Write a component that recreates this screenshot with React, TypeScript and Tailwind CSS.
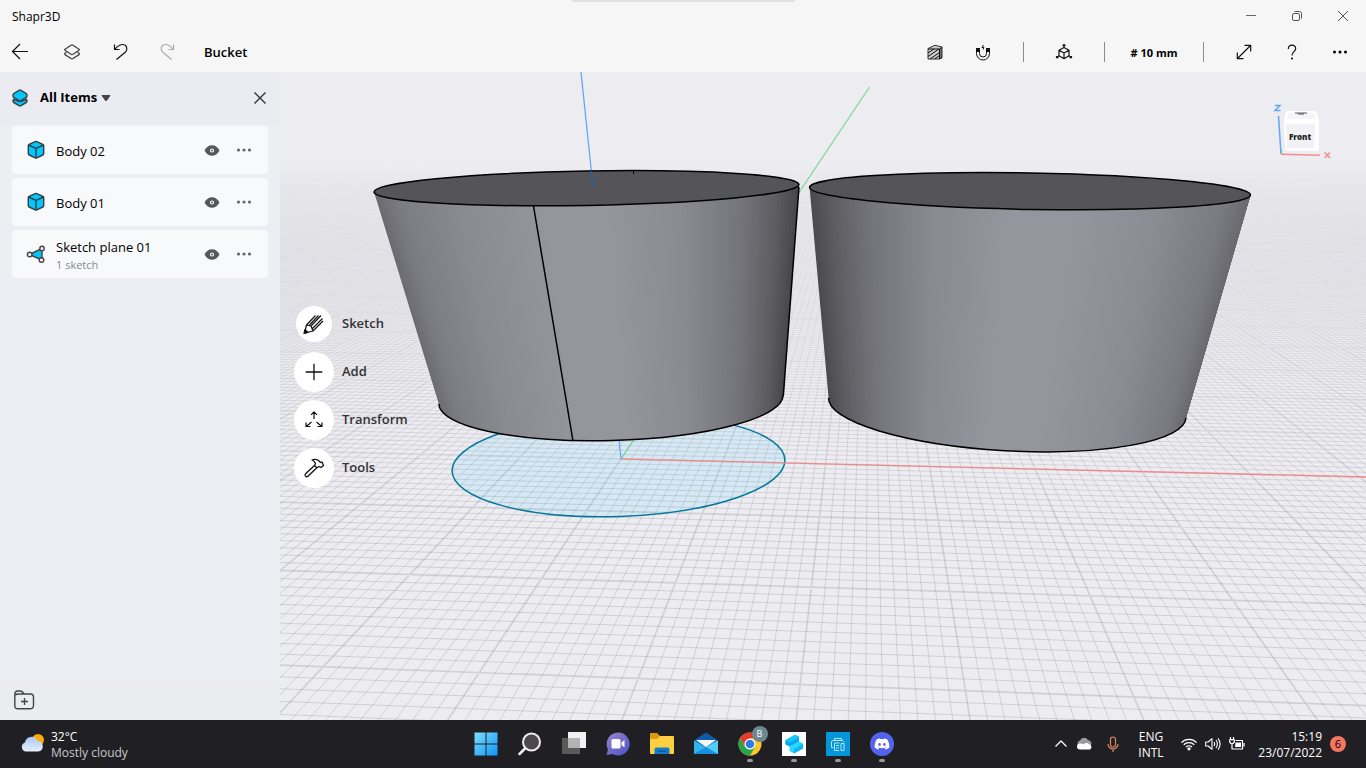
import React, { useState } from 'react';
import { FaDiscord } from 'react-icons/fa';

type Point = [number, number];

// ---------------------------------------------------------------------------
// Scene geometry
// ---------------------------------------------------------------------------

const ORIGIN: Point = [621, 459];
const VANISH_X: Point = [-16220, 51.5];
const VANISH_Y: Point = [869, 85.6];
const STEP_X = -0.006;
const STEP_Y = 0.1213;

const project = (u: number, v: number): Point => {
  const a = STEP_X * u;
  const b = STEP_Y * v;
  const w = 1 + a + b;
  return [
    (ORIGIN[0] + a * VANISH_X[0] + b * VANISH_Y[0]) / w,
    (ORIGIN[1] + a * VANISH_X[1] + b * VANISH_Y[1]) / w,
  ];
};

const depthLine = (i: number) => {
  const [x, y] = project(i / 10, 0);
  const slope = (x - VANISH_Y[0]) / (y - VANISH_Y[1]);
  const bottom = VANISH_Y[0] + slope * (760 - VANISH_Y[1]);
  const top = VANISH_Y[0] + slope * (150 - VANISH_Y[1]);
  return `M${bottom.toFixed(1)} 760L${top.toFixed(1)} 150`;
};

const crossLine = (i: number) => {
  const [x, y] = project(0, i / 10);
  const slope = (y - VANISH_X[1]) / (x - VANISH_X[0]);
  const left = y + slope * (270 - x);
  const right = y + slope * (1380 - x);
  return `M270 ${left.toFixed(2)}L1380 ${right.toFixed(2)}`;
};

const range = (from: number, to: number) => Array.from({ length: to - from + 1 }, (_, i) => from + i);

const minorGrid =
  range(-280, 280).filter((i) => i % 10 !== 0).map(depthLine).join('') +
  range(-39, 340).filter((i) => i % 10 !== 0).map(crossLine).join('');
const majorGrid =
  range(-28, 28).map((i) => depthLine(i * 10)).join('') +
  range(-3, 34).map((i) => crossLine(i * 10)).join('');

interface Ring {
  cx: number;
  cy: number;
  rx: number;
  ry: number;
  tilt: number;
}

const ringPoint = (ring: Ring, angle: number): Point => {
  const t = (ring.tilt * Math.PI) / 180;
  const x = ring.rx * Math.cos(angle);
  const y = ring.ry * Math.sin(angle);
  return [ring.cx + x * Math.cos(t) - y * Math.sin(t), ring.cy + x * Math.sin(t) + y * Math.cos(t)];
};

const shade = (stops: Point[], t: number) => {
  let i = 0;
  while (i < stops.length - 2 && t > stops[i + 1][0]) i++;
  const [t0, c0] = stops[i];
  const [t1, c1] = stops[i + 1];
  const c = c0 + ((c1 - c0) * (t - t0)) / (t1 - t0);
  return `rgb(${Math.round(c)},${Math.round(c)},${Math.round(c * 1.055)})`;
};

interface BucketProps {
  top: Ring;
  bottom: Ring;
  stops: Point[];
}

const Bucket: React.FC<BucketProps> = ({ top, bottom, stops }) => {
  const count = 120;
  const at = (i: number) => Math.acos(-1 + (2 * i) / count);
  const [lx, ly] = ringPoint(bottom, Math.PI);
  const [rx, ry] = ringPoint(bottom, 0);

  return (
    <g>
      {/* every strip runs under the ones to its right, so no seams show */}
      {range(0, count - 1).map((i) => {
        const columns = range(i, Math.min(i + 6, count));
        const points = [
          ...columns.map((c) => ringPoint(top, at(c))),
          ...columns.reverse().map((c) => ringPoint(bottom, at(c))),
        ];
        return <polygon key={i} points={points.map((p) => p.join(',')).join(' ')} fill={shade(stops, (i + 0.5) / count)} />;
      })}
      <path
        d={`M${lx} ${ly}A${bottom.rx} ${bottom.ry} ${bottom.tilt} 0 0 ${rx} ${ry}`}
        fill="none"
        stroke="#000"
        strokeWidth="1.5"
      />
      <ellipse
        cx={top.cx}
        cy={top.cy}
        rx={top.rx}
        ry={top.ry}
        transform={`rotate(${top.tilt} ${top.cx} ${top.cy})`}
        fill="#555459"
        stroke="#000"
        strokeWidth="1.5"
      />
    </g>
  );
};

const leftTop: Ring = { cx: 586.5, cy: 188.2, rx: 212.5, ry: 17.2, tilt: -1 };
const leftBottom: Ring = { cx: 611, cy: 399.5, rx: 172.2, ry: 41, tilt: -1.5 };
const rightTop: Ring = { cx: 1030, cy: 191.2, rx: 220.5, ry: 18.2, tilt: 1 };
const rightBottom: Ring = { cx: 1007.3, cy: 407.7, rx: 179, ry: 43, tilt: 3.2 };

const leftStops: Point[] = [[0, 106], [0.06, 124], [0.2, 138], [0.4, 149], [0.55, 149], [0.72, 138], [0.86, 117], [0.95, 92], [1, 70]];
const rightStops: Point[] = [[0, 74], [0.05, 92], [0.14, 116], [0.28, 137], [0.45, 149], [0.6, 149], [0.8, 139], [0.94, 122], [1, 104]];

const Scene: React.FC = () => (
  <svg viewBox="280 72 1086 648" preserveAspectRatio="xMidYMid slice" className="absolute inset-0 h-full w-full" aria-hidden="true">
    <defs>
      <linearGradient id="fade" gradientUnits="userSpaceOnUse" x1="0" y1="165" x2="0" y2="520">
        <stop offset="0" stopColor="#fff" stopOpacity="0" />
        <stop offset="0.15" stopColor="#fff" stopOpacity="0.14" />
        <stop offset="0.5" stopColor="#fff" stopOpacity="0.5" />
        <stop offset="1" stopColor="#fff" />
      </linearGradient>
      <mask id="gridMask" maskUnits="userSpaceOnUse" x="280" y="72" width="1086" height="648">
        <rect x="280" y="72" width="1086" height="648" fill="url(#fade)" />
      </mask>
    </defs>
    <rect x="280" y="72" width="1086" height="648" fill="#edecf1" />
    <ellipse cx="618.5" cy="465.5" rx="166.5" ry="51" transform="rotate(-2 618.5 465.5)" fill="#d5e8f3" />
    <g mask="url(#gridMask)" fill="none" stroke="#5c5c66">
      <path d={minorGrid} strokeOpacity="0.19" />
      <path d={majorGrid} strokeOpacity="0.19" strokeWidth="1.7" />
    </g>
    <ellipse cx="618.5" cy="465.5" rx="166.5" ry="51" transform="rotate(-2 618.5 465.5)" fill="none" stroke="#04789a" strokeWidth="1.5" />
    <g fill="none" strokeWidth="1.3">
      <path d="M621 459L1366 477" stroke="#f08a8a" />
      <path d="M621 459L869.500 87" stroke="#7ed796" />
      <path d="M621 459L593 187L581 72" stroke="#66a6f7" />
    </g>
    <Bucket top={leftTop} bottom={leftBottom} stops={leftStops} />
    <Bucket top={rightTop} bottom={rightBottom} stops={rightStops} />
    <path d="M799 187L783.300 396M533.500 206L573 441" stroke="#000" strokeWidth="1.5" fill="none" />
    <path d="M633.500 170V174" stroke="#000" />
    <path d="M591.300 171L593 187" stroke="#1d62b4" strokeWidth="1.300" />
  </svg>
);

const ViewCube: React.FC = () => (
  <button type="button" aria-label="View orientation" className="absolute top-7 right-8">
    <svg width="62" height="64" viewBox="1272 100 62 64" fill="none">
      <path d="M1286 112q1-1 3-1h25q3 0 3 2l2 8v28q0 2-2 2h-29q-3 0-3-3l-1-27z" fill="#fff" />
      <path d="M1288 113h26l2 6h-29z" fill="#f5f4f8" />
      <path d="M1286 124h29l-1 24h-27z" fill="#f2f2f6" />
      <path d="M1295 113h12M1298 114h6" stroke="#555" />
      <path d="M1278.500 116L1281 154" stroke="#62a4f8" strokeWidth="1.500" />
      <path d="M1281.500 154v-4" stroke="#5fd083" />
      <path d="M1281 154.300L1320 155.300" stroke="#f68c8c" strokeWidth="1.500" />
      <path d="M1275 105.500h5l-5 5h5.500" stroke="#62a4f8" strokeWidth="1.500" />
      <path d="M1324.500 152.500l5.500 5.500m0-5.500l-5.500 5.500" stroke="#f68c8c" strokeWidth="1.500" />
      <text x="1300" y="140" textAnchor="middle" fontSize="8" fontWeight="800" fill="#222">
        Front
      </text>
    </svg>
  </button>
);

// ---------------------------------------------------------------------------
// Icons
// ---------------------------------------------------------------------------

interface IconProps {
  size?: number;
  children: React.ReactNode;
  stroke?: string;
  width?: number;
}

const Icon: React.FC<IconProps> = ({ size = 24, children, stroke = '#111', width = 1 }) => (
  <svg width={size} height={size} viewBox={`0 0 ${size} ${size}`} fill="none" stroke={stroke} strokeWidth={width} strokeLinejoin="round" aria-hidden="true">
    {children}
  </svg>
);

const BackIcon = () => <Icon width={1.2}><path d="M20 11.500H4.500M12 4L4.500 11.500L12 19" /></Icon>;

const LayersIcon = () => (
  <Icon stroke="#444" width={1.3}>
    <path d="M11 5.300Q12 4.600 13 5.300L19 9.200Q19.700 9.800 19 10.300L13 14.200Q12 14.900 11 14.200L5 10.300Q4.300 9.800 5 9.200Z" />
    <path d="M6.500 12.200L5 13.300Q4.300 14 5 14.600L11 18.500Q12 19.200 13 18.500L19 14.600Q19.700 14 19 13.300L17.500 12.200" />
  </Icon>
);

const UndoIcon = () => <Icon width={1.2}><path d="M6.500 4.500v5h5M7 9C9 7 11 4.500 14.500 4.500C19 4.500 20 9.500 17.500 12L8.500 19.500" /></Icon>;
const RedoIcon = () => <Icon stroke="#aaa" width={1.2}><path d="M17.500 4.500v5h-5M17 9C15 7 13 4.500 9.500 4.500C5 4.500 4 9.500 6.500 12L15.500 19.500" /></Icon>;

const SectionIcon = () => (
  <Icon>
    <path d="M5 8.500L12 5.300L19 7V18L16.500 19H5Z" fill="#ccc" stroke="#333" />
    <path d="M5 9h11.500v10M16.500 9l2.500-2M5 13l6-4M5 16.500l11-7.500M7 19l9.500-6.500M11.500 19l5-3.500M18 8v10.500" />
  </Icon>
);

const MagnetIcon = () => (
  <Icon width={1}>
    <path d="M5.500 8.500h3v5a3.500 3.500 0 0 0 7 0v-5h3v5a6.500 6.500 0 0 1-13 0Z" />
    <path d="M5.500 8.500h3v3h-3zM15.500 8.500h3v3h-3z" fill="#111" />
    <path d="M12.500 5l-1.500 2.500h2l-1 2" />
  </Icon>
);

const AxesCubeIcon = () => (
  <Icon width={1.2}>
    <path d="M12 7.500l5 2.700v5.600l-5 2.900l-5-2.900v-5.600zM7 10.200l5 2.900l5-2.900M12 13v5.700M12 7.500V4.500M7 15.800l-2.500 2M17 15.800l2.500 2M10.700 5.800L12 4.300l1.300 1.500M4.500 16v1.700h2M19.500 16v1.700h-2" />
  </Icon>
);

const ExpandIcon = () => <Icon width={1.2}><path d="M5.500 18.500L18.500 5.500M12.500 5.300h6.200v6.200M5.300 12.500v6.200h6.200" /></Icon>;
const HelpIcon = () => (
  <Icon width={1.2}>
    <path d="M8.300 9C8.300 4 15.700 4 15.700 8.500C15.700 11.500 12 11.800 12 15.500" />
    <circle cx="12" cy="18.500" r="0.500" fill="#111" />
  </Icon>
);

const DotsIcon = ({ color = '#000', r = 1.5 }: { color?: string; r?: number }) => (
  <Icon stroke="none">
    <g fill={color}>
      <circle cx="6.500" cy="12" r={r} />
      <circle cx="12" cy="12" r={r} />
      <circle cx="17.500" cy="12" r={r} />
    </g>
  </Icon>
);

const AllItemsIcon = () => (
  <Icon stroke="#3e4347" width={1.5}>
    <path d="M5.500 13.500Q5 14 5 15Q5 16 5.800 16.500L11 19.600Q12 20.200 13 19.600L18.200 16.500Q19 16 19 15Q19 14 18.500 13.500L12 15.500Z" fill="#00c8ff" />
    <path d="M11 4.400Q12 3.800 13 4.400L18.200 7.600Q19 8.200 19 9.500Q19 11 18.200 11.500L13 14.600Q12 15.200 11 14.600L5.800 11.500Q5 11 5 9.500Q5 8.200 5.800 7.600Z" fill="#00c8ff" />
  </Icon>
);

const CubeIcon = () => (
  <Icon stroke="#333c42" width={1.4}>
    <path d="M11.200 3.700q.8-.3 1.600 0l6 2.600q.9.400.9 1.300v8q0 1-.9 1.400l-6 2.800q-.8.300-1.600 0l-6-2.800q-.9-.400-.9-1.400v-8q0-.900.9-1.300z" fill="#00c8ff" />
    <path d="M4.500 7L12 10.300L19.500 7M12 10.300v9.500" />
  </Icon>
);

const PlaneIcon = () => (
  <Icon stroke="#444" width={1.4}>
    <path d="M5.500 12.500L18 6.500V18z" fill="#00c8ff" />
    <circle cx="5.700" cy="12.500" r="2.300" fill="#fff" />
    <circle cx="18" cy="6.500" r="2.200" fill="#fff" />
    <circle cx="17.500" cy="18" r="2.300" fill="#fff" />
  </Icon>
);

const EyeIcon = () => (
  <Icon stroke="none">
    <path d="M4.500 12.500C8 5.500 16 5.500 19.500 12.500C16 19.500 8 19.500 4.500 12.500Z" fill="#585858" />
    <circle cx="12" cy="12.500" r="1.500" stroke="#fff" strokeWidth="1.100" />
  </Icon>
);

const FolderPlusIcon = () => (
  <Icon stroke="#444" width={1.4}>
    <path d="M2.800 6.500V17.500Q2.800 20.800 6 20.800H18Q21.300 20.800 21.500 17.500V9Q21.500 6 18.500 6H12L10.500 4Q9.500 3 8 3H5.500Q2.800 3 2.800 6.500ZM3.500 7Q4.500 6 6 6H12M12.500 10v7M9 13.500h7" />
  </Icon>
);

const SketchIcon = () => (
  <Icon width={1.2}>
    <path d="M2.500 21L4.500 13L13.500 3.500M2.500 21L11 19L21 9M4.500 13L9 14L11 19M9 14L19 3.500M7.500 13L16.500 3.500M10.500 16.500L20.500 6.500" />
    <path d="M2 21.500l1-4l3 3z" fill="#111" />
  </Icon>
);
const AddIcon = () => <Icon width={1.3}><path d="M12 3.700v16.600M3.700 12h16.600" /></Icon>;
const TransformIcon = () => (
  <Icon width={1.2}>
    <path d="M12 11V4M9 6.800L12 3.800l3 3M9.500 14L4.500 18.200M4 14.500V18.500h4.500M14.500 14l5 4.200M20 14.500V18.500h-4.500" />
  </Icon>
);
const HammerIcon = () => (
  <Icon width={1.3}>
    <path d="M12.500 9.500L3.500 17.800Q2.500 19 3.500 20.200Q4.800 21.300 6 20.200L14.800 11.800M10 4Q13.500 2.500 16.500 4.500L18.500 6.500L20 6L21.500 9.500L19 11.500L17 10.500L14.800 11.800L12.500 9.500L13.500 7.500Q12.500 5 10 4Z" />
  </Icon>
);

// ---------------------------------------------------------------------------
// Window chrome
// ---------------------------------------------------------------------------

const toolButton = 'flex h-10 w-12 shrink-0 items-center justify-center';

const Separator = () => <span className="mx-4 h-5 w-px shrink-0 bg-[#8c8c8c]" />;

const Header: React.FC = () => (
  <header className="relative shrink-0 bg-[#f6f6f6]">
    <div className="absolute top-0 left-1/2 h-0.5 w-56 -translate-x-1/2 rounded-b bg-[#e2e2e2]" />
    <div className="flex h-8 items-center justify-between">
      <h1 className="pt-0.5 pl-3 text-[12px]">Shapr3D</h1>
      <div className="flex">
        <button type="button" aria-label="Minimize" className="flex h-8 w-[46px] items-center justify-center">
          <Icon size={12} stroke="#666"><path d="M1 5.500h10" /></Icon>
        </button>
        <button type="button" aria-label="Restore" className="flex h-8 w-[46px] items-center justify-center">
          <Icon size={12} stroke="#555">
            <rect x="1.500" y="3.500" width="7" height="7" rx="1.500" />
            <path d="M3.500 1.500h5q2 0 2 2v5" />
          </Icon>
        </button>
        <button type="button" aria-label="Close window" className="flex h-8 w-[46px] items-center justify-center">
          <Icon size={12} stroke="#555"><path d="M1 1l10 10M11 1L1 11" /></Icon>
        </button>
      </div>
    </div>
    <div className="flex h-10 items-center pr-0.5">
      <button type="button" aria-label="Back" className="mr-2 flex h-10 w-10 items-center justify-center"><BackIcon /></button>
      <button type="button" aria-label="Items" className={toolButton}><LayersIcon /></button>
      <button type="button" aria-label="Undo" className={toolButton}><UndoIcon /></button>
      <button type="button" aria-label="Redo" disabled className={toolButton}><RedoIcon /></button>
      <h2 className="ml-3 flex-1 pt-0.5 text-[13px] font-semibold">Bucket</h2>
      <button type="button" aria-label="Section view" className={toolButton}><SectionIcon /></button>
      <button type="button" aria-label="Snapping" className={toolButton}><MagnetIcon /></button>
      <Separator />
      <button type="button" aria-label="Orientation" className={toolButton}><AxesCubeIcon /></button>
      <Separator />
      <button type="button" className="h-10 w-[66px] pt-0.5 text-[11px] font-bold whitespace-nowrap"># 10 mm</button>
      <Separator />
      <button type="button" aria-label="Full screen" className={toolButton}><ExpandIcon /></button>
      <button type="button" aria-label="Help" className={toolButton}><HelpIcon /></button>
      <button type="button" aria-label="More" className={toolButton}><DotsIcon /></button>
    </div>
  </header>
);

const items = [
  { name: 'Body 02', detail: '', icon: <CubeIcon /> },
  { name: 'Body 01', detail: '', icon: <CubeIcon /> },
  { name: 'Sketch plane 01', detail: '1 sketch', icon: <PlaneIcon /> },
];

const Sidebar: React.FC<{ onClose: () => void }> = ({ onClose }) => (
  <aside className="flex w-[280px] shrink-0 flex-col bg-[#ebeff4]">
    <div className="flex h-[52px] items-center bg-[#ebecf1] px-2">
      <AllItemsIcon />
      <button type="button" className="ml-2 flex items-center gap-1 text-[13px] font-bold">
        All Items
        <svg width="10" height="8" viewBox="0 0 10 8" aria-hidden="true"><path d="M1 1.500h8L5.500 6.500q-.5.500-1 0z" fill="#444" stroke="#444" strokeLinejoin="round" /></svg>
      </button>
      <button type="button" aria-label="Close panel" onClick={onClose} className="ml-auto">
        <Icon stroke="#333" width={1.4}><path d="M6.500 6.500l11 11M17.500 6.500l-11 11" /></Icon>
      </button>
    </div>
    <ul className="flex flex-1 flex-col gap-1 px-3 pt-0.5">
      {items.map((item) => (
        <li key={item.name} className="flex h-12 items-center rounded bg-[#f8f9fb] pr-2 pl-3">
          {item.icon}
          <div className="ml-2 flex-1 pt-0.5">
            <p className="text-[13px] leading-5">{item.name}</p>
            {item.detail && <p className="text-[11px] leading-4 text-[#8a8a8a]">{item.detail}</p>}
          </div>
          <button type="button" aria-label={`Hide ${item.name}`} className="flex w-8 justify-center"><EyeIcon /></button>
          <button type="button" aria-label={`Options for ${item.name}`} className="flex w-8 justify-center">
            <DotsIcon color="#666" r={1.6} />
          </button>
        </li>
      ))}
    </ul>
    <div className="flex h-10 items-center bg-[#ebecf0] px-3">
      <button type="button" aria-label="New folder"><FolderPlusIcon /></button>
    </div>
  </aside>
);

const tools = [
  { label: 'Sketch', icon: <SketchIcon />, circle: 'size-9' },
  { label: 'Add', icon: <AddIcon />, circle: 'size-10' },
  { label: 'Transform', icon: <TransformIcon />, circle: 'size-10' },
  { label: 'Tools', icon: <HammerIcon />, circle: 'size-10' },
];

const ToolMenu: React.FC = () => (
  <nav className="absolute top-58 left-3.5 flex flex-col items-start gap-2">
    {tools.map((tool) => (
      <button type="button" key={tool.label} className="flex h-10 items-center gap-2 text-[13px] font-semibold text-[#333]">
        <span className="flex w-10 justify-center">
          <span className={`${tool.circle} flex items-center justify-center rounded-full bg-white`}>{tool.icon}</span>
        </span>
        {tool.label}
      </button>
    ))}
  </nav>
);

// ---------------------------------------------------------------------------
// Taskbar
// ---------------------------------------------------------------------------

const WindowsLogo = () => (
  <svg width="24" height="24" viewBox="0 0 24 24" fill="url(#win)">
    <defs>
      <linearGradient id="win" gradientUnits="userSpaceOnUse" x1="0" y1="0" x2="24" y2="24">
        <stop stopColor="#7fe0ff" />
        <stop offset="1" stopColor="#0a94f5" />
      </linearGradient>
    </defs>
    <path d="M.5.500h11v11H.5zM12.500.500h11v11h-11zM.5 12.500h11v11H.5zM12.500 12.500h11v11h-11z" />
  </svg>
);

const SearchLogo = () => (
  <svg width="24" height="24" viewBox="0 0 24 24" fill="none" stroke="#eee" strokeWidth="2">
    <path d="M7 16.500L1.500 22" strokeWidth="2.500" strokeLinecap="round" />
    <circle cx="13.500" cy="10" r="8.500" fill="#4b494f" />
  </svg>
);

const TaskViewLogo = () => (
  <svg width="24" height="24" viewBox="0 0 24 24">
    <rect y="6" width="18" height="16" fill="#5a5a5a" />
    <rect x="6" width="18" height="16" fill="#f2f2f2" />
    <rect x="6" y="6" width="12" height="10" fill="#b3b3b3" />
  </svg>
);

const ChatLogo = () => (
  <svg width="24" height="24" viewBox="0 0 24 24">
    <defs>
      <linearGradient id="chat" x1="0" y1="0" x2="1" y2="1">
        <stop stopColor="#9a86c8" />
        <stop offset="1" stopColor="#4b50c8" />
      </linearGradient>
    </defs>
    <path d="M12 .500A11.500 11.500 0 1 1 6.500 22L.5 23L2 17.500A11.500 11.500 0 0 1 12 .500Z" fill="url(#chat)" />
    <rect x="5.500" y="7" width="9" height="9.500" rx="1.500" fill="#fff" />
    <path d="M15.500 10.500L18.500 8v7.500l-3-2.500z" fill="#fff" />
  </svg>
);

const ExplorerLogo = () => (
  <svg width="24" height="24" viewBox="0 0 24 24">
    <path d="M0 2q0-1 1-1h6l3 3v5H0z" fill="#dc9a0c" />
    <path d="M0 7h7l3-3h13q1 0 1 1v16q0 1-1 1H1q-1 0-1-1z" fill="#fdd041" />
    <path d="M4.500 22v-5q0-1.500 1.500-1.500h12q1.500 0 1.500 1.500v5z" fill="#147cc8" />
    <rect x="7.500" y="18.500" width="9" height="1.500" rx=".7" fill="#0c5c9c" />
  </svg>
);

const MailLogo = () => (
  <svg width="24" height="24" viewBox="0 0 24 24">
    <path d="M0 8.500L12 .500L24 8.500V12H0z" fill="#0c5cab" />
    <path d="M2.500 8h19L12 15z" fill="#f4f4f6" />
    <path d="M0 8.500L12 15L24 8.500V22H0z" fill="#2fb4ee" />
    <path d="M2 8h20L12 15z" fill="#f4f4f6" />
    <path d="M0 22L15 13.300L24 22z" fill="#1590dc" />
    <path d="M24 8.500L12 15L24 22z" fill="#52cdf7" />
  </svg>
);

const ChromeLogo = () => (
  <svg width="24" height="24" viewBox="0 0 24 24">
    <circle cx="12" cy="12" r="11.500" fill="#fcc72b" />
    <path d="M2 6.200A11.500 11.500 0 0 1 22 6.200H12L7 14.500z" fill="#e33b2e" />
    <path d="M2 6.200A11.500 11.500 0 0 0 12 23.500L17 15L7 15z" fill="#2ba24c" />
    <circle cx="12" cy="12" r="5.500" fill="#fff" />
    <circle cx="12" cy="12" r="4.300" fill="#2f7de9" />
  </svg>
);

const ShaprLogo = () => (
  <svg width="24" height="24" viewBox="0 0 24 24">
    <rect width="24" height="24" fill="#fff" />
    <path d="M3.500 8L13 2.500L17 4.500V9.500L8 14.500L3.500 12.500z" fill="#12c8f8" />
    <path d="M3.500 8L8 10.500L17 5.500V9.500L8 14.500L3.500 12.500z" fill="#0da4f2" />
    <path d="M7.500 14.500L17 9.300L21 11.500V16.500L12 21.500L7.500 19z" fill="#27d8ff" />
    <path d="M12 17L21 11.800V16.500L12 21.500z" fill="#12b6f6" />
  </svg>
);

const DeviceLogo = () => (
  <svg width="24" height="24" viewBox="0 0 24 24" fill="none" stroke="#b9e4f8" strokeWidth="1">
    <rect width="24" height="24" fill="#0496d8" stroke="none" />
    <path d="M8.500 8V6.500h7v1.500M7.500 15.500H5.500V9.500L7 8.500h9.500l1.500 2M8.500 11h5M8.500 11v7.500h4.500M10 13.500h3M10 16h3M15 11.500h3v7h-3z" />
  </svg>
);

const DiscordLogo = () => (
  <span className="flex size-6 items-center justify-center rounded-full bg-[#5562ee]">
    <FaDiscord size={16} color="#fff" />
  </span>
);

const apps = [
  { name: 'Start', logo: <WindowsLogo />, running: false },
  { name: 'Search', logo: <SearchLogo />, running: false },
  { name: 'Task view', logo: <TaskViewLogo />, running: false },
  { name: 'Chat', logo: <ChatLogo />, running: false },
  { name: 'File Explorer', logo: <ExplorerLogo />, running: false },
  { name: 'Mail', logo: <MailLogo />, running: false },
  { name: 'Chrome', logo: <ChromeLogo />, running: true, badge: 'B' },
  { name: 'Modeling', logo: <ShaprLogo />, running: true },
  { name: 'Device manager', logo: <DeviceLogo />, running: true },
  { name: 'Discord', logo: <DiscordLogo />, running: true },
];

const Taskbar: React.FC = () => (
  <footer className="grid h-12 shrink-0 grid-cols-[1fr_auto_1fr] items-center bg-[#201f23] text-[12px] leading-4 text-white">
    <button type="button" className="flex items-center gap-1.5 pl-5 text-left">
      <svg width="25" height="22" viewBox="0 0 25 22" aria-hidden="true">
        <defs>
          <linearGradient id="cloud" x1="0" y1="0" x2="0" y2="1">
            <stop stopColor="#a8c8f4" />
            <stop offset="1" stopColor="#e8effa" />
          </linearGradient>
        </defs>
        <circle cx="18" cy="7" r="6" fill="#ffa90a" />
        <path d="M5.500 18.500A4.700 4.700 0 0 1 5 9.500A6.500 6.500 0 0 1 17.500 8A5.300 5.300 0 0 1 18.500 18.500Z" fill="url(#cloud)" />
      </svg>
      <span className="pt-0.5">
        <span className="block">32°C</span>
        <span className="block text-[#c9c9c9]">Mostly cloudy</span>
      </span>
    </button>
    <div className="flex pl-px">
      {apps.map((app) => (
        <button type="button" key={app.name} aria-label={app.name} className="relative flex h-12 w-11 items-center justify-center">
          {app.logo}
          {app.badge && (
            <span className="absolute top-1.5 right-1 flex size-4 items-center justify-center rounded-full bg-[#6e8791] text-[9px]">
              {app.badge}
            </span>
          )}
          {app.running && <span className="absolute bottom-1.5 left-1/2 h-[3px] w-1.5 -translate-x-1/2 rounded-full bg-[#9a9a9c]" />}
        </button>
      ))}
    </div>
    <div className="flex items-center justify-end pr-5">
      <button type="button" aria-label="Hidden icons" className="flex w-6 justify-center">
        <Icon size={16} stroke="#fff" width={1.3}><path d="M2.500 10.500L8 5l5.500 5.500" /></Icon>
      </button>
      <button type="button" aria-label="Cloud storage" className="flex w-6 justify-center">
        <svg width="16" height="16" viewBox="0 0 16 16">
          <path d="M2 10a3 3 0 0 1 1-5.500A4.500 4.500 0 0 1 11 4a3.500 3.500 0 0 1 3 5z" fill="#9a9a9a" />
          <path d="M3 13.500a3 3 0 0 1 0-6Q5 7 6.500 8.500Q9 6 12 8a3 3 0 0 1 1 5.500z" fill="#fff" />
        </svg>
      </button>
      <button type="button" aria-label="Microphone" className="flex w-8 justify-center">
        <Icon size={16} stroke="#d98a63" width={1.2}><path d="M5.500 3.500a2.500 2.500 0 0 1 5 0v5a2.500 2.500 0 0 1-5 0zM3 8a5 5 0 0 0 10 0M8 13v3" /></Icon>
      </button>
      <button type="button" className="w-11 pt-0.5 text-center">
        <span className="block">ENG</span>
        <span className="block">INTL</span>
      </button>
      <button type="button" aria-label="Network" className="ml-1 flex w-6 justify-center">
        <Icon size={16} stroke="#fff" width={1.3}>
          <path d="M0.500 6.500a10.500 10.500 0 0 1 15 0M2.700 8.800a7.500 7.500 0 0 1 10.600 0M5 11a4.300 4.300 0 0 1 6 0" />
          <circle cx="8" cy="12.800" r="1" fill="#fff" />
        </Icon>
      </button>
      <button type="button" aria-label="Volume" className="flex w-6 justify-center">
        <Icon size={16} stroke="#fff" width={1.1}>
          <path d="M.7 6h2.500L7 2.700v10.600L3.200 10H.7zM9 6q1.300 2 0 4M11 4q2.800 4 0 8M13 2.300q4.300 5.700 0 11.400" />
        </Icon>
      </button>
      <button type="button" aria-label="Battery" className="flex w-6 justify-center">
        <Icon size={16} stroke="#fff" width={1.2}>
          <path d="M6.500 4.500h7v8.500H3V8M15 7v3.500M1.500 1v2.500M4.500 1v2.500M.7 3.700h4.600V6L4 7.500H2L.7 6z" />
          <path d="M6.500 6.500h5.500v4.500H6z" fill="#fff" stroke="none" />
        </Icon>
      </button>
      <button type="button" className="w-[73px] pt-0.5 text-right">
        <span className="block">15:19</span>
        <span className="block">23/07/2022</span>
      </button>
      <span className="ml-2 flex size-4 items-center justify-center rounded-full bg-[#f4765f] text-[11px] text-black">6</span>
    </div>
  </footer>
);

const App: React.FC = () => {
  const [showItems, setShowItems] = useState(true);

  return (
    <div className="flex h-screen flex-col overflow-hidden font-['Open_Sans','Noto_Sans',sans-serif] text-black">
      <Header />
      <div className="flex min-h-0 flex-1">
        {showItems && <Sidebar onClose={() => setShowItems(false)} />}
        <main className="relative flex-1 overflow-hidden bg-[#edecf1]">
          <Scene />
          <ToolMenu />
          <ViewCube />
        </main>
      </div>
      <Taskbar />
    </div>
  );
};

export default App;
